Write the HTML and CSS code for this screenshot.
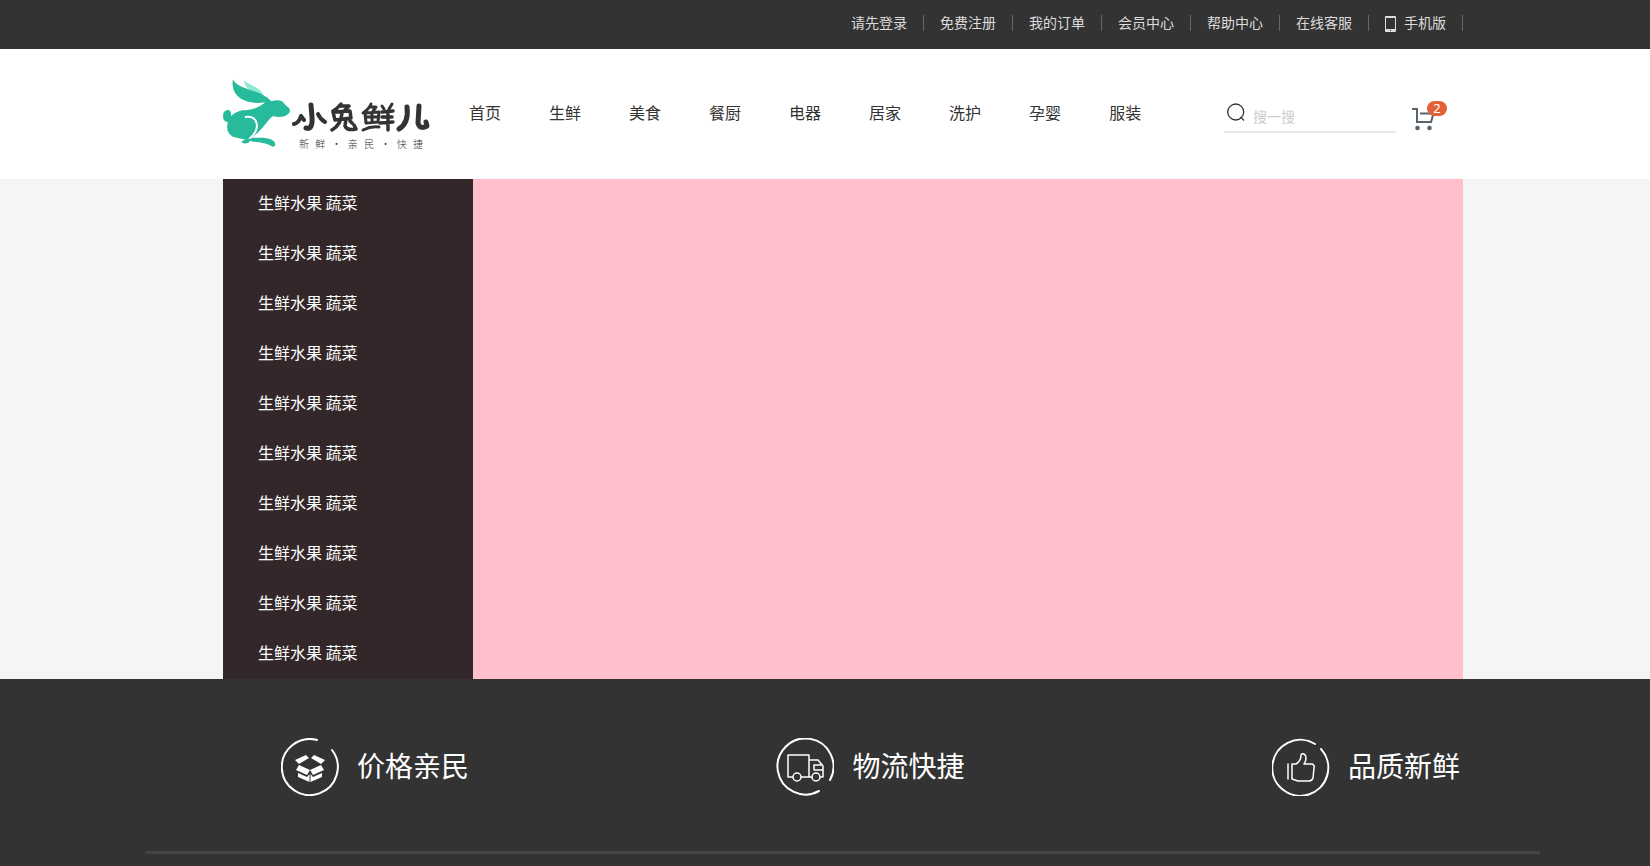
FILE: index.html
```html
<!DOCTYPE html>
<html lang="zh-CN">
<head>
<meta charset="utf-8">
<title>小兔鲜儿</title>
<link rel="stylesheet" href="styles.css">
</head>
<body>
<div class="topbar">
  <ul class="wrapper topbar-list">
    <li><a href="#">请先登录</a></li>
    <li><a href="#">免费注册</a></li>
    <li><a href="#">我的订单</a></li>
    <li><a href="#">会员中心</a></li>
    <li><a href="#">帮助中心</a></li>
    <li><a href="#">在线客服</a></li>
    <li><a href="#"><svg class="phone" viewBox="0 0 11 16" width="11" height="16" aria-hidden="true"><path fill="#ddd" fill-rule="evenodd" d="M1 0h9a1 1 0 0 1 1 1v14a1 1 0 0 1-1 1H1a1 1 0 0 1-1-1V1a1 1 0 0 1 1-1zM1 2v11h9V2zM5 14v1h1v-1z"/></svg>手机版</a></li>
  </ul>
</div>
<header class="header">
  <div class="wrapper header-inner">
    <a class="logo" href="#" aria-label="小兔鲜儿">
      <svg class="rabbit" viewBox="0 0 70 70" width="70" height="70" aria-hidden="true">
        <path fill="#8fe8cf" d="M21 1C27 6 39 8 42 18C35 12 23 13 21 1z"/>
        <path fill="#27ba9b" d="M10 0C16 11 38 10 49 22Q55 20 60 22Q64 27 67 29Q70 34 63 37Q57 39 51 37C47 39 43 46 39 50Q35 55 29 59H41Q52 60 53 65Q53 69 50 68C41 62 32 65 25 61Q17 60 10 58Q2 53 5 43Q0 43 0 37Q0 31 6 31Q9 33 8 37Q14 32 21 31Q32 32 43 23C27 26 7 20 10 0z"/>
        <path fill="none" stroke="#fff" stroke-width="2" stroke-linecap="round" d="M23 38Q32 37 34 44Q36 51 29 58L25 62"/>
        <path fill="#27ba9b" d="M19 63Q23 59 28 60Q27 65 22 65Q19 65 19 63z"/>
      </svg>
      <span class="logo-text">
        <svg class="logo-name" viewBox="0 0 138 32" width="138" height="32" aria-hidden="true" fill="none" stroke="#333" stroke-linecap="round" stroke-linejoin="round">
          <path stroke-width="5" d="M19 4L20 16Q21 29 14 27"/>
          <path stroke-width="4" d="M2 23Q7 22 9 15L12 19M26 13Q28 18 33 21"/>
          <path stroke-width="3.500" d="M49 3Q45 8 41 10M48 5H57L53 9M41 11L58 10L59 17L43 19zM50 12Q49 24 40 29M54 18L53 25Q55 30 64 28L62 24M58 20L60 22"/>
          <path stroke-width="3" d="M79 3Q77 8 71 12M78 6H84L81 10M73 12L87 11L86 21L74 22zM80 12V21M75 16H85M71 29Q79 25 87 26M90 5L92 8M100 3L97 8"/>
          <path stroke-width="3.500" d="M90 11L101 10M90 16H100M88 22L101 21M96 10V29"/>
          <path stroke-width="5" d="M115 6Q117 22 107 28M127 5L126 22Q128 29 135 25L134 21"/>
        </svg>
        <span class="slogan"><span>新</span><span>鲜</span><span>·</span><span>亲</span><span>民</span><span>·</span><span>快</span><span>捷</span></span>
      </span>
    </a>
    <nav class="nav">
      <a href="#">首页</a><a href="#">生鲜</a><a href="#">美食</a><a href="#">餐厨</a><a href="#">电器</a><a href="#">居家</a><a href="#">洗护</a><a href="#">孕婴</a><a href="#">服装</a>
    </nav>
    <form class="search">
      <svg viewBox="0 0 18 18" width="18" height="18" fill="none" stroke="#333" stroke-width="1.3" aria-hidden="true"><circle cx="8.700" cy="9" r="8"/><path d="M13.500 14L17 17.500"/></svg>
      <input type="search" placeholder="搜一搜" aria-label="搜一搜">
    </form>
    <a class="cart" href="#" aria-label="购物车">
      <svg viewBox="0 0 24 24" width="24" height="24" aria-hidden="true"><path fill="none" stroke="#56636c" stroke-width="2" d="M0 2H5V15H19L21.500 6.500H8"/><circle cx="5.500" cy="21" r="2.300" fill="#56636c"/><circle cx="17.500" cy="21" r="2.300" fill="#56636c"/></svg>
      <span class="badge">2</span>
    </a>
  </div>
</header>
<main class="banner">
  <div class="wrapper banner-inner">
    <ul class="categories">
      <li><a href="#">生鲜水果 蔬菜</a></li>
      <li><a href="#">生鲜水果 蔬菜</a></li>
      <li><a href="#">生鲜水果 蔬菜</a></li>
      <li><a href="#">生鲜水果 蔬菜</a></li>
      <li><a href="#">生鲜水果 蔬菜</a></li>
      <li><a href="#">生鲜水果 蔬菜</a></li>
      <li><a href="#">生鲜水果 蔬菜</a></li>
      <li><a href="#">生鲜水果 蔬菜</a></li>
      <li><a href="#">生鲜水果 蔬菜</a></li>
      <li><a href="#">生鲜水果 蔬菜</a></li>
    </ul>
  </div>
</main>
<footer class="footer">
  <div class="services">
    <div class="service">
      <svg viewBox="0 0 58 58" width="58" height="58" aria-hidden="true"><path fill="none" stroke="#fff" stroke-width="2" stroke-linecap="round" d="M36 2A28 28 0 1 0 51 12"/><g fill="#fff"><path d="M25 17L28 20L18 26L14 22zM33 17L30 20L40 26L44 22zM18 27L29 32L26 37L15 32zM40 27L29 32L32 37L43 32zM17 35L26 39L28.500 36V44L17 39zM41 35L32 39L29.500 36V44L41 39z"/></g></svg>
      <span>价格亲民</span>
    </div>
    <div class="service">
      <svg viewBox="0 0 58 58" width="58" height="58" fill="none" stroke="#fff" aria-hidden="true"><path stroke-width="2" stroke-linecap="round" d="M43 53A28 28 0 1 1 54 42"/><g stroke-width="1.500" stroke-linejoin="round"><path d="M17 39H12V17H33V39H25M33 22H42L47 28V39H44M36 39H33M46 27H38V32H47"/><circle cx="21" cy="39" r="4"/><circle cx="40" cy="39" r="4"/></g></svg>
      <span>物流快捷</span>
    </div>
    <div class="service">
      <svg viewBox="0 0 58 58" width="58" height="58" fill="none" stroke="#fff" aria-hidden="true"><path stroke-width="2" stroke-linecap="round" d="M43 6A28 28 0 1 0 49 11"/><path stroke-width="1.500" stroke-linecap="round" stroke-linejoin="round" d="M16 26V41M20 26H24Q29 23 29 17Q30 15 32 16Q34 17 34 20Q34 23 32 26H40Q43 27 42 30L41 40Q40 43 37 43H26L20 41z"/></svg>
      <span>品质新鲜</span>
    </div>
  </div>
</footer>
</body>
</html>
```
FILE: styles.css
```css
* {
  box-sizing: border-box;
}

body {
  margin: 0;
  color: #333;
  background: #333;
  font: 16px/24px "Noto Sans CJK SC", sans-serif;
}

ul {
  margin: 0;
  padding: 0;
  list-style: none;
}

a {
  color: inherit;
  text-decoration: none;
}

.topbar,
.header,
.banner,
.footer {
  padding-left: 36px;
}

.wrapper {
  max-width: 1240px;
  margin: 0 auto;
}

.topbar {
  background: #333;
}

.topbar-list {
  display: flex;
  justify-content: flex-end;
  padding: 15px 0 18px;
  color: #dcdcdc;
  font-size: 14px;
  line-height: 14px;
}

.topbar-list li {
  height: 16px;
  padding: 0 16px;
  border-right: 1px solid #666;
}

.topbar-list a {
  display: flex;
  gap: 8px;
}

.phone {
  margin-top: 1px;
}

.header {
  background: #fff;
}

.header-inner {
  display: flex;
  align-items: flex-start;
  height: 130px;
}

.logo {
  display: flex;
  width: 207px;
  margin: 30px 39px 0 0;
}

.logo-text {
  display: flex;
  flex-direction: column;
  padding-top: 22px;
}

.logo-name {
  flex: none;
}

.slogan {
  display: flex;
  justify-content: space-between;
  width: 124px;
  margin-left: 7px;
  font-size: 10px;
  font-weight: 300;
  line-height: 22px;
}

.nav {
  display: flex;
  gap: 48px;
  padding-top: 51px;
}

.search {
  display: flex;
  gap: 8px;
  width: 172px;
  height: 32px;
  margin: 52px 16px 0 auto;
  padding: 2px 0 0 3px;
  border-bottom: 2px solid #e7e7e7;
}

.search svg {
  flex: none;
}

.search input {
  min-width: 0;
  flex: 1;
  padding: 0 0 2px;
  border: 0;
  outline: 0;
  background: transparent;
  font: 14px/20px "Noto Sans CJK SC", sans-serif;
}

.search input::placeholder {
  color: #ccc;
}

.cart {
  position: relative;
  width: 24px;
  height: 24px;
  margin: 58px 27px 0 0;
}

.cart svg {
  display: block;
}

.badge {
  position: absolute;
  top: -6px;
  left: 15px;
  width: 20px;
  border-radius: 8px;
  color: #fff;
  background: #e26237;
  font: 13px/15px "Noto Sans", sans-serif;
  text-align: center;
}

.banner {
  background: #f5f5f5;
}

.banner-inner {
  background: #ffc0cb;
}

.categories {
  width: 250px;
  color: #fff;
  background: #332729;
}

.categories a {
  display: block;
  padding: 11px 35px 15px;
}

.footer {
  color: #fff;
  background: #333;
}

.services {
  display: flex;
  justify-content: space-between;
  max-width: 1394px;
  margin: 0 auto;
  padding: 59px 80px 55px 135px;
  border-bottom: 3px solid #444;
}

.service {
  display: flex;
  gap: 18px;
  font-size: 28px;
  line-height: 54px;
}
```
